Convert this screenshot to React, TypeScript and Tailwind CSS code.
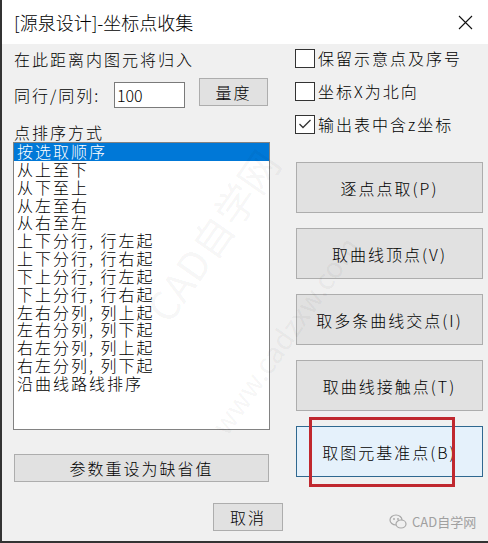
import React from 'react';

const sortModes = [
  '按选取顺序',
  '从上至下',
  '从下至上',
  '从左至右',
  '从右至左',
  '上下分行, 行左起',
  '上下分行, 行右起',
  '下上分行, 行左起',
  '下上分行, 行右起',
  '左右分列, 列上起',
  '左右分列, 列下起',
  '右左分列, 列上起',
  '右左分列, 列下起',
  '沿曲线路线排序',
];

const options = [
  { label: '保留示意点及序号', checked: false },
  { label: '坐标X为北向', checked: false },
  { label: '输出表中含z坐标', checked: true },
];

const actions = ['逐点点取(P)', '取曲线顶点(V)', '取多条曲线交点(I)', '取曲线接触点(T)', '取图元基准点(B)'];

const App: React.FC = () => {
  return (
    <div className="relative w-[488px] h-[543px] overflow-hidden flex flex-col bg-[#f0f0f0] border-l-2 border-b-2 border-[#333333] text-black font-['Noto_Sans_CJK_SC','Noto_Sans',sans-serif]">
      {/* 标题栏 */}
      <div className="h-[44px] shrink-0 bg-white flex items-center justify-between pl-[12px] pr-[15px]">
        <span className="text-[18px] leading-none font-light">[源泉设计]-坐标点收集</span>
        <svg width="15" height="15" viewBox="0 0 15 15" className="mt-[1px]">
          <path d="M1 1 L14 14 M14 1 L1 14" stroke="#111" strokeWidth="1.1" fill="none" />
        </svg>
      </div>

      {/* 主体 */}
      <div className="flex-1 px-[11px] text-[16px] tracking-[2px] font-light">
        <div className="flex">
          {/* 左侧 */}
          <div className="w-[257px] pt-[5px]">
            <div className="pl-[1px] leading-[20px]">在此距离内图元将归入</div>

            <div className="mt-[9px] h-[30px] flex">
              <div className="w-[101px] pl-[1px] pt-[7px] leading-[20px]">同行/同列:</div>
              <div className="mt-[4px] h-[26px] w-[71px] bg-white border border-[#7a7a7a] pl-[2px] leading-[24px] tracking-normal">
                100
              </div>
              <button className="ml-[14px] h-[28px] w-[69px] bg-[#e1e1e1] border border-[#adadad] leading-[26px]">
                量度
              </button>
            </div>

            <div className="mt-[14px] pl-[1px] leading-[20px]">点排序方式</div>

            <div className="h-[288px] w-[257px] bg-white border border-[#828282]">
              {sortModes.map((m, i) => (
                <div
                  key={m}
                  className={
                    i === 0
                      ? 'h-[17.85px] leading-[17.85px] pl-[3px] whitespace-pre bg-[#0078d7] text-white'
                      : 'h-[17.85px] leading-[17.85px] pl-[3px] whitespace-pre'
                  }
                >
                  {m}
                </div>
              ))}
            </div>

            <button className="mt-[24px] ml-[1px] h-[28px] w-[255px] bg-[#e1e1e1] border border-[#adadad] leading-[26px]">
              参数重设为缺省值
            </button>
          </div>

          {/* 右侧 */}
          <div className="ml-[25px] pt-[4px]">
            <div className="flex flex-col gap-[13px]">
              {options.map((o) => (
                <div key={o.label} className="h-[20px] flex items-center gap-[3px]">
                  <div className="w-[20px] h-[19px] bg-white border border-[#333333] flex items-center justify-center">
                    {o.checked && (
                      <svg width="14" height="12" viewBox="0 0 14 12">
                        <path d="M1.5 6 L5 9.5 L12.5 2" stroke="#333" strokeWidth="1.3" fill="none" />
                      </svg>
                    )}
                  </div>
                  <span className="leading-[20px] whitespace-nowrap">{o.label}</span>
                </div>
              ))}
            </div>

            <div className="mt-[28px] ml-[1px] flex flex-col gap-[15px]">
              {actions.map((a, i) => (
                <button
                  key={a}
                  className={
                    i === actions.length - 1
                      ? 'h-[51px] w-[187px] bg-[#e5f1fb] border border-[#2f6890]'
                      : 'h-[51px] w-[187px] bg-[#e1e1e1] border border-[#adadad]'
                  }
                >
                  {a}
                </button>
              ))}
            </div>
          </div>
        </div>

        <div className="mt-[21px] pl-[200px] flex">
          <button className="h-[28px] w-[70px] bg-[#e1e1e1] border border-[#adadad] leading-[26px]">取消</button>
        </div>
      </div>

      {/* 水印 */}
      <div className="absolute left-[210px] top-[235px] -translate-x-1/2 -translate-y-1/2 rotate-[-55deg] whitespace-nowrap text-[40px] text-[rgba(0,0,0,0.05)] pointer-events-none">
        CAD自学网
      </div>
      <div className="absolute left-[282px] top-[335px] -translate-x-1/2 -translate-y-1/2 rotate-[-55deg] whitespace-nowrap text-[28px] text-[rgba(0,0,0,0.05)] pointer-events-none">
        www.cadzxw.com
      </div>

      {/* 红框标注 */}
      <div className="absolute left-[307px] top-[417px] w-[146px] h-[70px] border-[3px] border-[#c0282f] pointer-events-none" />

      {/* 角标 */}
      <div className="absolute left-[387px] top-[512px] flex items-center gap-[5px] text-[13px] text-[#a0a0a0] pointer-events-none">
        <svg width="18" height="16" viewBox="0 0 18 16">
          <ellipse cx="7" cy="6" rx="6" ry="5" fill="none" stroke="#a8a8a8" strokeWidth="1.2" />
          <ellipse cx="12" cy="10" rx="5" ry="4" fill="#f0f0f0" stroke="#a8a8a8" strokeWidth="1.2" />
          <circle cx="5" cy="5" r="0.9" fill="#a8a8a8" />
          <circle cx="9" cy="5" r="0.9" fill="#a8a8a8" />
        </svg>
        <span>CAD自学网</span>
      </div>
    </div>
  );
};

export default App;
